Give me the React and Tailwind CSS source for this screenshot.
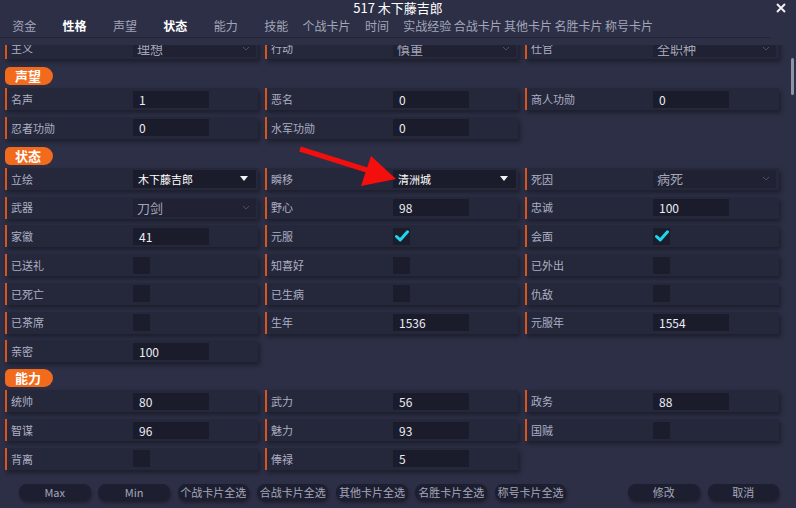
import React from 'react'

const TABS = [
  ['资金', false], ['性格', true], ['声望', false], ['状态', true], ['能力', false], ['技能', false],
  ['个战卡片', false], ['时间', false], ['实战经验', false], ['合战卡片', false], ['其他卡片', false],
  ['名胜卡片', false], ['称号卡片', false],
]

// each cell: [label, kind, value]
const TOP = [
  ['主义', 'locked', '理想'], ['行动', 'locked', '慎重'], ['仕官', 'locked', '全职种'],
]

const SECTIONS = [
  {
    title: '声望', mt: 'mt-[8px]',
    rows: [
      ['名声', 'num', '1'], ['恶名', 'num', '0'], ['商人功勋', 'num', '0'],
      ['忍者功勋', 'num', '0'], ['水军功勋', 'num', '0'],
    ],
  },
  {
    title: '状态', mt: 'mt-[8px]',
    rows: [
      ['立绘', 'select', '木下藤吉郎'], ['瞬移', 'select', '清洲城'], ['死因', 'locked', '病死'],
      ['武器', 'locked', '刀剑'], ['野心', 'num', '98'], ['忠诚', 'num', '100'],
      ['家徽', 'num', '41'], ['元服', 'check', true], ['会面', 'check', true],
      ['已送礼', 'check', false], ['知喜好', 'check', false], ['已外出', 'check', false],
      ['已死亡', 'check', false], ['已生病', 'check', false], ['仇敌', 'check', false],
      ['已茶席', 'check', false], ['生年', 'num', '1536'], ['元服年', 'num', '1554'],
      ['亲密', 'num', '100'],
    ],
  },
  {
    title: '能力', mt: 'mt-[7px]',
    rows: [
      ['统帅', 'num', '80'], ['武力', 'num', '56'], ['政务', 'num', '88'],
      ['智谋', 'num', '96'], ['魅力', 'num', '93'], ['国贼', 'check', false],
      ['背离', 'check', false], ['俸禄', 'num', '5'],
    ],
  },
]

const BUTTONS_LEFT = ['Max', 'Min', '个战卡片全选', '合战卡片全选', '其他卡片全选', '名胜卡片全选', '称号卡片全选']

function Value({ kind, value }) {
  if (kind === 'num') {
    return (
      <div className="w-[76px] h-[17px] bg-[#1b1c2b] pl-[6px] text-[12px] leading-[17px] text-[#eceef6]">{value}</div>
    )
  }
  if (kind === 'check') {
    return (
      <div className="w-[17px] h-[17px] bg-[#1c1d2c] flex items-center justify-center">
        {value && (
          <svg width="14" height="12" viewBox="0 0 14 12">
            <path d="M1.5 6.5 L5.2 10 L12.5 1.8" fill="none" stroke="#1cd8ec" strokeWidth="3" strokeLinecap="round" strokeLinejoin="round" />
          </svg>
        )}
      </div>
    )
  }
  if (kind === 'select') {
    return (
      <div className="w-[123px] h-[18px] bg-[#1b1c2b] pl-[5px] pr-[8px] flex items-center justify-between text-[11px] text-white">
        <span>{value}</span>
        <svg width="8" height="5" viewBox="0 0 8 5"><path d="M0 0 H8 L4 5 Z" fill="#f2f2f6" /></svg>
      </div>
    )
  }
  return (
    <div className="w-[123px] h-[18px] bg-[#202133] pl-[4px] pr-[6px] flex items-center justify-between text-[13px] text-[#a2a5b8]">
      <span className="leading-none">{value}</span>
      <svg width="8" height="5" viewBox="0 0 8 5"><path d="M1 1 L4 4 L7 1" fill="none" stroke="#4a4d63" strokeWidth="1" /></svg>
    </div>
  )
}

function Row({ label, kind, value }) {
  return (
    <div className="h-[22px] flex items-center bg-[#25273a] border-l-2 border-[#d8561e] shadow-[2px_3px_4px_rgba(0,0,0,0.35)]">
      <span className="pl-[4px] w-[126px] shrink-0 text-[11px] text-[#adb0c4]">{label}</span>
      <Value kind={kind} value={value} />
    </div>
  )
}

function Grid({ rows, className = '' }) {
  return (
    <div className={`grid grid-cols-[253px_253px_254px] gap-x-[7px] gap-y-[6.75px] ${className}`}>
      {rows.map(([l, k, v]) => <Row key={l} label={l} kind={k} value={v} />)}
    </div>
  )
}

export default function App() {
  return (
    <div
      className="relative w-[796px] h-[508px] overflow-hidden bg-[#2c2f45] text-[#a6a9bd]"
      style={{ fontFamily: '"Noto Sans CJK SC", "Noto Sans", sans-serif' }}
    >
      <div className="h-[16px] text-center text-[13px] leading-[16px] text-white">517 木下藤吉郎</div>
      <svg className="absolute left-[776px] top-[3px]" width="10" height="10" viewBox="0 0 10 10">
        <path d="M1 1 L9 9 M9 1 L1 9" stroke="#f0f0f4" strokeWidth="2" />
      </svg>

      <div className="flex h-[20px] items-center -ml-px">
        {TABS.map(([t, on]) => (
          <div key={t} className={`w-[50.4px] shrink-0 text-center text-[12px] whitespace-nowrap ${on ? 'text-white font-bold' : 'text-[#a3a6ba]'}`}>{t}</div>
        ))}
      </div>
      <div className="h-px w-[770px] bg-[#222435] mt-px" />

      <div className="relative h-[433px] overflow-hidden mt-[7px]">
        <div className="-mt-[8px] pl-[5px]">
          <Grid rows={TOP} />
          {SECTIONS.map(s => (
            <div key={s.title} className={s.mt}>
              <div className="w-[48px] h-[18px] bg-[#f26a1b] rounded-l-[5px] rounded-r-[9px] pl-[10px] text-[13px] leading-[18px] font-bold text-white">{s.title}</div>
              <Grid rows={s.rows} className="mt-[3px]" />
            </div>
          ))}
        </div>
      </div>

      <div className="flex items-center mt-[6px] pl-[19px] pr-[17px]">
        <div className="flex gap-[7.8px]">
          {BUTTONS_LEFT.map(b => (
            <div key={b} className="w-[71.5px] h-[17px] rounded-[8px] bg-[#1d1f30] text-center text-[11px] leading-[17px] text-[#a4a7bb] shadow-[1px_2px_3px_rgba(0,0,0,0.3)]">{b}</div>
          ))}
        </div>
        <div className="ml-auto flex gap-[8px]">
          {['修改', '取消'].map(b => (
            <div key={b} className="w-[71.5px] h-[17px] rounded-[8px] bg-[#1d1f30] text-center text-[11px] leading-[17px] text-[#a4a7bb] shadow-[1px_2px_3px_rgba(0,0,0,0.3)]">{b}</div>
          ))}
        </div>
      </div>

      <div className="absolute left-[791px] top-[58px] w-[3px] h-[37px] rounded-sm bg-[#8f92a6]" />

      <svg className="absolute left-0 top-0 pointer-events-none" width="796" height="508">
        <line x1="300" y1="149" x2="370" y2="171" stroke="#f40f0f" strokeWidth="5" />
        <polygon points="371,156 361,186 396,179" fill="#f40f0f" />
      </svg>
    </div>
  )
}
